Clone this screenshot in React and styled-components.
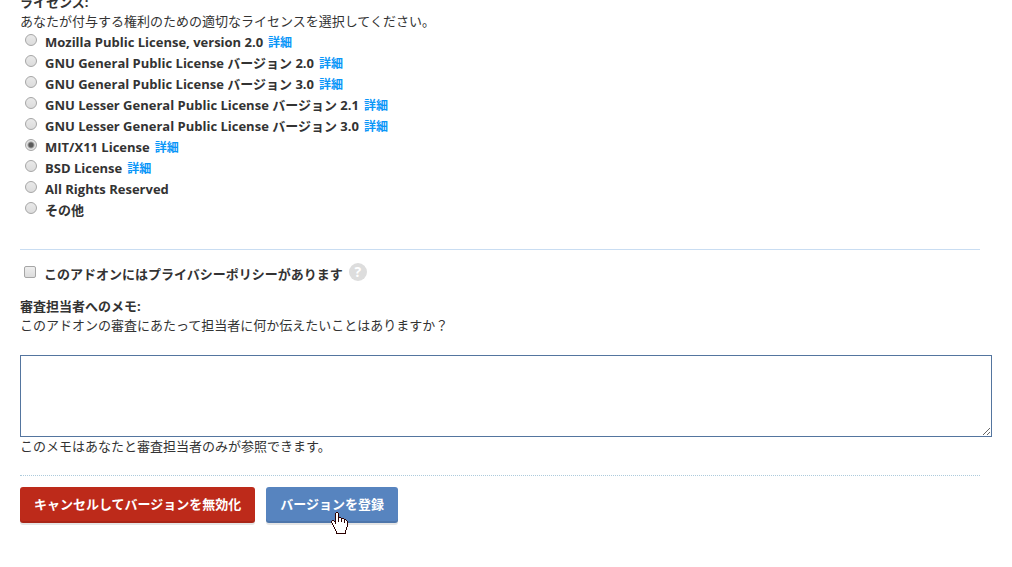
import { useState } from 'react';
import styled, { createGlobalStyle } from 'styled-components';

const GlobalStyle = createGlobalStyle`
    body {
        margin: 0;
        background: #ffffff;
        color: #333333;
        font-family: "Open Sans", "Noto Sans CJK JP", sans-serif;
        font-size: 13px;
        line-height: 19px;
    }
`;

const licenses = [
    { id: 'mpl2', name: 'Mozilla Public License, version 2.0', details: true },
    { id: 'gpl2', name: 'GNU General Public License バージョン 2.0', details: true },
    { id: 'gpl3', name: 'GNU General Public License バージョン 3.0', details: true },
    { id: 'lgpl21', name: 'GNU Lesser General Public License バージョン 2.1', details: true },
    { id: 'lgpl3', name: 'GNU Lesser General Public License バージョン 3.0', details: true },
    { id: 'mit', name: 'MIT/X11 License', details: true },
    { id: 'bsd', name: 'BSD License', details: true },
    { id: 'arr', name: 'All Rights Reserved', details: false },
    { id: 'other', name: 'その他', details: false },
];

const Form = styled.form`
    margin-top: -7px;
    padding: 0 32px 32px 20px;
`;

const Heading = styled.h3`
    margin: 0;
    font-size: 13px;
    line-height: 19px;
    font-weight: 700;
`;

const MemoLabel = styled.label`
    display: block;
    font-weight: 700;
`;

const Text = styled.p`
    margin: 0;
`;

const LicenseList = styled.ul`
    list-style: none;
    margin: 1px 0 28px;
    padding: 0;
`;

const Row = styled.li`
    display: flex;
    align-items: center;
    height: 21px;
    padding-left: 5px;
`;

const Label = styled.label`
    font-weight: 700;
    white-space: nowrap;
`;

const Radio = styled.input`
    appearance: none;
    box-sizing: border-box;
    flex: none;
    width: 12px;
    height: 12px;
    margin: 0 8px 5px 0;
    border: 1px solid #a6a6a6;
    border-radius: 50%;
    background: linear-gradient(#e9e9e9, #dcdcdc);

    &:checked {
        background: radial-gradient(circle, #5a5a5a 0 2px, #e4e4e4 4px);
    }
`;

const DetailLink = styled.a`
    margin-left: 5px;
    color: #0996f8;
    font-size: 12px;
    font-weight: 700;
    text-decoration: none;
`;

const PolicyRow = styled.div`
    display: flex;
    align-items: center;
    padding: 13px 0 12px 4px;
    border-top: 1px solid #c9ddf2;
`;

const Checkbox = styled.input`
    appearance: none;
    box-sizing: border-box;
    flex: none;
    width: 12px;
    height: 12px;
    margin: 0 8px 4px 0;
    border: 1px solid #a6a6a6;
    border-radius: 2px;
    background: linear-gradient(#eeeeee, #dcdcdc);

    &:checked {
        background: #5a5a5a;
    }
`;

const Help = styled.button`
    width: 18px;
    height: 18px;
    margin: 0 0 4px 6px;
    padding: 0;
    border: 0;
    border-radius: 50%;
    background: #dddddd;
    color: #ffffff;
    font: 700 14px/18px "Open Sans", sans-serif;
`;

const Memo = styled.textarea`
    display: block;
    box-sizing: border-box;
    width: calc(100% + 12px);
    height: 82px;
    margin-top: 20px;
    padding: 4px;
    border: 1px solid #54759f;
    outline: 0;
    background: #ffffff;
    font: inherit;
    resize: vertical;
`;

const Actions = styled.div`
    display: flex;
    gap: 11px;
    margin-top: 19px;
    padding-top: 11px;
    border-top: 1px dotted #adcbdc;
`;

const ButtonHolder = styled.div`
    position: relative;
`;

const Button = styled.button`
    height: 36px;
    padding: 0 14px 2px;
    border: 0;
    border-radius: 3px;
    background: ${props => (props.$danger ? '#bd2a1a' : '#5784bf')};
    box-shadow: 0 2px 0 rgba(0, 0, 0, 0.1), inset 0 -2px 0 rgba(0, 0, 0, 0.1);
    color: #ffffff;
    font: inherit;
    font-weight: 700;
    white-space: nowrap;
`;

const Pointer = styled.svg`
    position: absolute;
    left: 65px;
    top: 25px;
    pointer-events: none;
`;

function HandPointer() {
    return (
        <Pointer width="17" height="22" viewBox="0 0 17 22" shapeRendering="crispEdges" aria-hidden="true">
            <path
                d="M5 1h2v5h3v1h3v1h2v1h1v6h-1v3h-1v3H5v-3H4v-2H3v-2H2v-2H1V9h3v1h1z"
                fill="#ffffff"
            />
            <path
                d="M5 0h2v1H5zM4 1h1v11H4zM7 1h1v9H7zM8 5h2v1H8zM10 6h1v4h-1zM11 6h2v1h-2zM13 7h1v4h-1zM14 7h1v1h-1zM15 8h1v1h-1zM16 9h1v6h-1zM15 15h1v3h-1zM14 18h1v3h-1zM5 21h10v1H5zM5 19h1v2H5zM4 17h1v2H4zM3 15h1v2H3zM2 13h1v2H2zM1 11h1v2H1zM0 9h1v2H0zM1 8h2v1H1zM3 9h1v1H3z"
                fill="#2b0000"
            />
        </Pointer>
    );
}

export default function App() {
    const [license, setLicense] = useState('mit');
    const [hasPolicy, setHasPolicy] = useState(false);
    const [memo, setMemo] = useState('');

    return (
        <>
            <GlobalStyle />
            <Form onSubmit={(e) => e.preventDefault()}>
                <Heading>ライセンス:</Heading>
                <Text>あなたが付与する権利のための適切なライセンスを選択してください。</Text>
                <LicenseList>
                    {licenses.map(({ id, name, details }) => (
                        <Row key={id}>
                            <Radio
                                type="radio"
                                name="license"
                                id={id}
                                checked={license === id}
                                onChange={() => setLicense(id)}
                            />
                            <Label htmlFor={id}>{name}</Label>
                            {details && <DetailLink href={`#${id}`}>詳細</DetailLink>}
                        </Row>
                    ))}
                </LicenseList>
                <PolicyRow>
                    <Checkbox
                        type="checkbox"
                        id="policy"
                        checked={hasPolicy}
                        onChange={(e) => setHasPolicy(e.target.checked)}
                    />
                    <Label htmlFor="policy">このアドオンにはプライバシーポリシーがあります</Label>
                    <Help type="button">?</Help>
                </PolicyRow>
                <MemoLabel htmlFor="memo">審査担当者へのメモ:</MemoLabel>
                <Text>このアドオンの審査にあたって担当者に何か伝えたいことはありますか？</Text>
                <Memo id="memo" value={memo} onChange={(e) => setMemo(e.target.value)} />
                <Text>このメモはあなたと審査担当者のみが参照できます。</Text>
                <Actions>
                    <Button type="button" $danger>キャンセルしてバージョンを無効化</Button>
                    <ButtonHolder>
                        <Button type="submit">バージョンを登録</Button>
                        <HandPointer />
                    </ButtonHolder>
                </Actions>
            </Form>
        </>
    );
}
